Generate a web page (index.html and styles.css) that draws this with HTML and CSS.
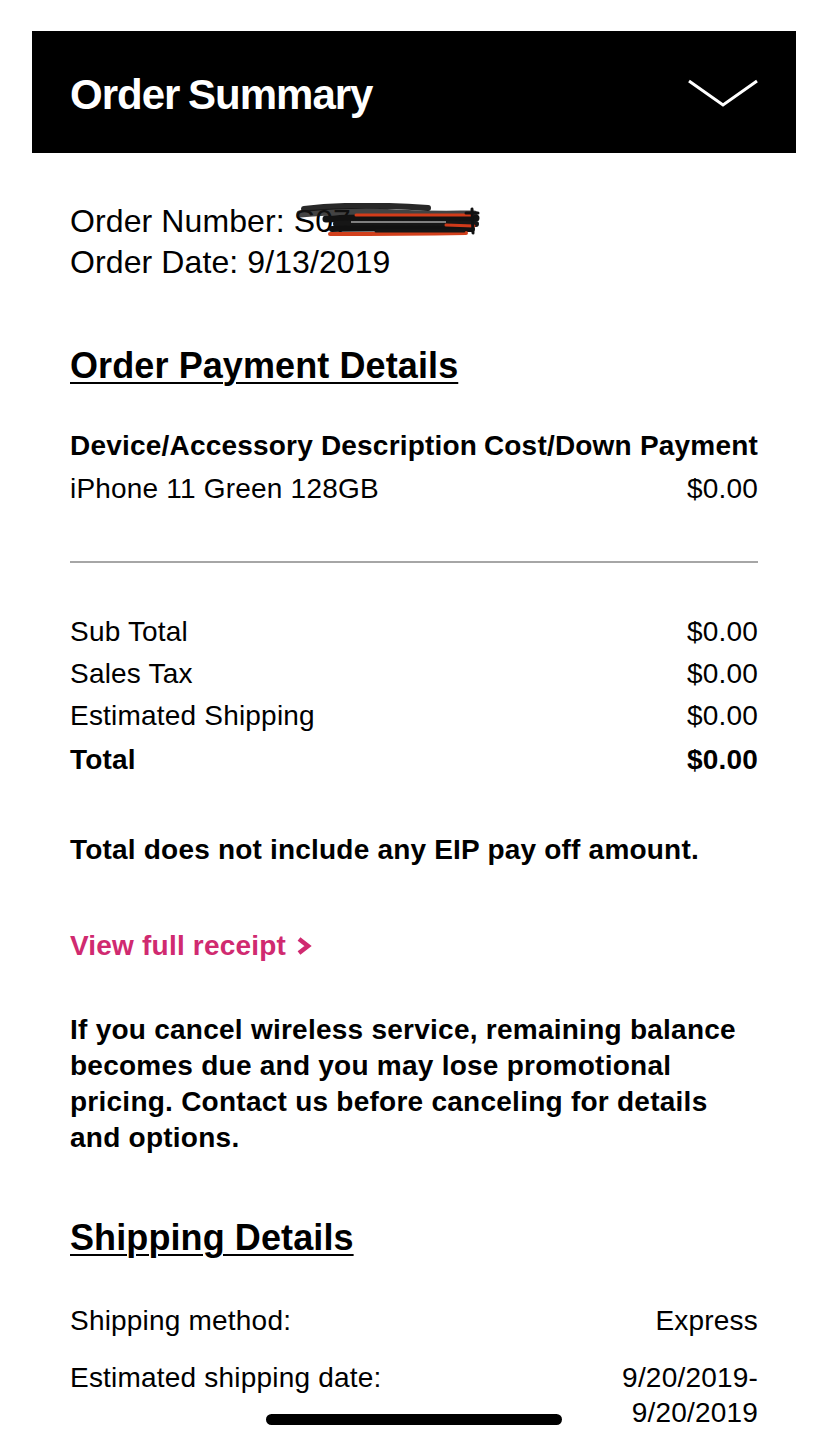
FILE: index.html
```html
<!DOCTYPE html>
<html lang="en">
<head>
<meta charset="utf-8">
<title>Order Summary</title>
<link rel="stylesheet" href="styles.css">
</head>
<body>
<div class="page">
  <header class="summary-bar">
    <h1 class="summary-title">Order Summary</h1>
    <svg class="chevron" width="72" height="30" viewBox="0 0 72 30" aria-hidden="true">
      <polyline points="2,3 36,27 70,3" fill="none" stroke="#fff" stroke-width="3"/>
    </svg>
  </header>

  <main class="content">
    <section class="order-info">
      <div>Order Number: <span class="redacted">S07<svg class="scribble" width="184" height="36" viewBox="0 0 184 36" aria-hidden="true">
        <path d="M8 6 C50 1 90 2 132 5" stroke="#111" stroke-width="6" fill="none" stroke-linecap="round" opacity="0.9"/>
        <path d="M4 11 C40 8 60 8 100 10 S160 11 178 11" stroke="#141414" stroke-width="7" fill="none" stroke-linecap="round" opacity="0.8"/>
        <path d="M30 16 C70 14 120 15 180 15" stroke="#121212" stroke-width="7" fill="none" stroke-linecap="round"/>
        <path d="M60 12 L176 12" stroke="#d23c1a" stroke-width="3" fill="none" stroke-linecap="round"/>
        <path d="M40 21 C90 19 130 20 180 21" stroke="#161616" stroke-width="6" fill="none" stroke-linecap="round"/>
        <path d="M55 19 L150 19" stroke="#e8e8e8" stroke-width="1" fill="none"/>
        <path d="M36 26 C80 25 130 26 176 26" stroke="#111" stroke-width="6" fill="none" stroke-linecap="round"/>
        <path d="M34 31 C70 31 110 31 170 30" stroke="#d2401c" stroke-width="4" fill="none" stroke-linecap="round"/>
        <path d="M80 28 L168 28" stroke="#161616" stroke-width="3" fill="none" stroke-linecap="round"/>
        <path d="M150 22 L178 23" stroke="#cf3a1a" stroke-width="3" fill="none" stroke-linecap="round"/>
        <path d="M176 6 L177 30" stroke="#111" stroke-width="3" fill="none" stroke-linecap="round"/>
        <path d="M170 10 L182 10" stroke="#111" stroke-width="3" fill="none" stroke-linecap="round"/>
      </svg></span></div>
      <div>Order Date: 9/13/2019</div>
    </section>

    <h2 class="section-heading first">Order Payment Details</h2>

    <div class="row bold table-head">
      <span>Device/Accessory Description</span>
      <span>Cost/Down Payment</span>
    </div>
    <div class="row item">
      <span>iPhone 11 Green 128GB</span>
      <span>$0.00</span>
    </div>

    <hr class="divider">

    <div class="totals">
      <div class="row"><span>Sub Total</span><span>$0.00</span></div>
      <div class="row"><span>Sales Tax</span><span>$0.00</span></div>
      <div class="row"><span>Estimated Shipping</span><span>$0.00</span></div>
      <div class="row bold total"><span>Total</span><span>$0.00</span></div>
    </div>

    <p class="note">Total does not include any EIP pay off amount.</p>

    <a class="receipt-link" href="#">View full receipt <svg class="link-chev" width="16" height="18" viewBox="0 0 16 18" aria-hidden="true"><polyline points="3,2 12,9 3,16" fill="none" stroke="#d02a70" stroke-width="4.5"/></svg></a>

    <p class="note para">If you cancel wireless service, remaining balance becomes due and you may lose promotional pricing. Contact us before canceling for details and options.</p>

    <h2 class="section-heading ship">Shipping Details</h2>

    <div class="ship-row first-ship"><span>Shipping method:</span><span>Express</span></div>
    <div class="ship-row"><span>Estimated shipping date:</span><span class="date-range">9/20/2019-<br>9/20/2019</span></div>
  </main>
</div>
<div class="home-indicator"></div>
</body>
</html>
```

FILE: styles.css
```css
html, body {
  margin: 0;
  padding: 0;
  background: #fff;
}

body {
  font-family: "Liberation Sans", Arial, Helvetica, sans-serif;
  color: #000;
  width: 828px;
  min-height: 1444px;
}

.page {
  padding-top: 31px;
}

.summary-bar {
  margin: 0 32px;
  height: 122px;
  background: #000;
  display: flex;
  align-items: center;
  justify-content: space-between;
  padding: 0 37px 0 38px;
}

.summary-title {
  margin: 0;
  color: #fff;
  font-family: "Liberation Sans", sans-serif;
  font-weight: 700;
  font-size: 42px;
  letter-spacing: -1px;
  word-spacing: -2px;
  line-height: 1;
  padding-top: 6px;
}

.chevron {
  display: block;
  margin-top: 2px;
}

.content {
  padding: 0 70px;
  font-size: 28px;
  letter-spacing: 0.2px;
}

.order-info {
  margin-top: 48px;
  font-size: 32px;
  line-height: 41px;
  letter-spacing: 0.1px;
}

.redacted {
  position: relative;
  display: inline-block;
}

.scribble {
  position: absolute;
  left: 2px;
  top: 2px;
}

.section-heading {
  margin: 0;
  font-size: 36px;
  font-weight: 700;
  line-height: 44px;
  text-decoration: underline;
  text-decoration-thickness: 2px;
  text-underline-offset: 4px;
  letter-spacing: 0.1px;
}

.section-heading.first {
  margin-top: 61px;
}

.row {
  display: flex;
  justify-content: space-between;
  line-height: 42px;
}

.bold {
  font-weight: 700;
}

.table-head {
  margin-top: 37px;
}

.row.item {
  margin-top: 1px;
}

.divider {
  margin: 51px 0 0 0;
  border: 0;
  height: 2px;
  background: #a6a6a6;
}

.totals {
  margin-top: 48px;
}

.total {
  margin-top: 2px;
}

.note {
  margin: 51px 0 0 0;
  font-weight: 700;
  font-size: 28px;
  line-height: 36px;
}

.receipt-link {
  display: block;
  margin-top: 60px;
  color: #d02a70;
  font-weight: 700;
  text-decoration: none;
  line-height: 36px;
}

.link-chev {
  display: inline-block;
  vertical-align: 0px;
  margin-left: 2px;
}

.note.para {
  margin-top: 48px;
  letter-spacing: 0.25px;
}

.section-heading.ship {
  margin-top: 60px;
}

.ship-row {
  display: flex;
  justify-content: space-between;
  line-height: 35px;
  margin-top: 22px;
}

.ship-row.first-ship {
  margin-top: 43px;
}

.date-range {
  text-align: right;
}

.home-indicator {
  position: fixed;
  left: 266px;
  top: 1414px;
  width: 296px;
  height: 11px;
  border-radius: 6px;
  background: #000;
}
```
